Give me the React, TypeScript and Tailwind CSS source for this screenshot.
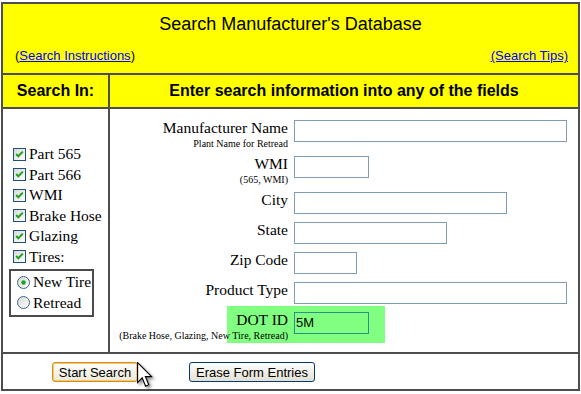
import React from "react";

const sans = { fontFamily: '"Liberation Sans", Arial, sans-serif' };
const serif = { fontFamily: '"Liberation Serif", "Times New Roman", serif' };

function CheckBox() {
  return (
    <svg width="13" height="13" viewBox="0 0 13 13" className="shrink-0">
      <defs>
        <linearGradient id="cbg" x1="0" y1="0" x2="1" y2="1">
          <stop offset="0" stopColor="#d8d8d2" />
          <stop offset="1" stopColor="#ffffff" />
        </linearGradient>
      </defs>
      <rect x="0.5" y="0.5" width="12" height="12" fill="url(#cbg)" stroke="#1c5180" />
      <path d="M3.2 6 L5.3 8.3 L9.8 3.6" fill="none" stroke="#21a121" strokeWidth="2" />
    </svg>
  );
}

function Radio({ checked }: { checked?: boolean }) {
  return (
    <svg width="13" height="13" viewBox="0 0 13 13" className="shrink-0">
      <defs>
        <linearGradient id="rbg" x1="0" y1="0" x2="1" y2="1">
          <stop offset="0" stopColor="#d8d8d2" />
          <stop offset="1" stopColor="#ffffff" />
        </linearGradient>
      </defs>
      <circle cx="6.5" cy="6.5" r="6" fill="url(#rbg)" stroke="#3b6791" />
      {checked && <circle cx="6.5" cy="6.5" r="2.3" fill="#21a121" />}
    </svg>
  );
}

const checks = ["Part 565", "Part 566", "WMI", "Brake Hose", "Glazing", "Tires:"];

export default function App() {
  return (
    <div className="w-[581px] h-[394px] bg-white overflow-hidden">
      <div className="ml-[1px] mt-[2px] w-[579px] h-[389px] border-2 border-[#4d4d4d] flex flex-col">
        {/* header */}
        <div className="h-[71px] shrink-0 bg-[#ffff00] border-b-2 border-[#4d4d4d] pt-[10px] text-black" style={sans}>
          <div className="text-center text-[18px] leading-[21px]">Search Manufacturer's Database</div>
          <div className="mt-[13px] flex justify-between pl-[12px] pr-[10px] text-[13px] leading-[15px]">
            <span>
              (<span className="text-[#0000ff] underline">Search Instructions</span>)
            </span>
            <span className="text-[#0000ff] underline">(Search Tips)</span>
          </div>
        </div>
        {/* second header row */}
        <div className="h-[34px] shrink-0 flex bg-[#ffff00] border-b-2 border-[#4d4d4d] font-bold text-[16px] leading-[18px] text-black" style={sans}>
          <div className="w-[107px] border-r-2 border-[#4d4d4d] flex items-center justify-center">Search In:</div>
          <div className="flex-1 flex items-center justify-center">Enter search information into any of the fields</div>
        </div>
        {/* body */}
        <div className="h-[245px] shrink-0 flex border-b-2 border-[#4d4d4d] text-black" style={serif}>
          <div className="w-[107px] shrink-0 border-r-2 border-[#4d4d4d] pt-[35px] text-[15.5px]">
            <div className="pl-[10px]">
              {checks.map((c) => (
                <div key={c} className="h-[20.5px] flex items-center gap-[3px] whitespace-nowrap leading-[20.5px]">
                  <CheckBox />
                  <span>{c}</span>
                </div>
              ))}
            </div>
            <div className="ml-[6px] mt-[2px] w-[85px] h-[48px] border-2 border-[#4b4b4b] pt-[1px] pl-[6px]">
              <div className="h-[20.5px] flex items-center gap-[3px] whitespace-nowrap leading-[20.5px]">
                <Radio checked />
                <span>New Tire</span>
              </div>
              <div className="h-[20.5px] flex items-center gap-[3px] whitespace-nowrap leading-[20.5px]">
                <Radio />
                <span>Retread</span>
              </div>
            </div>
          </div>
          <div className="flex-1 relative pt-[11px]">
            <div className="absolute left-[117px] top-[197px] w-[158px] h-[37px] bg-[#80ff80]" />
            {[
              { label: "Manufacturer Name", sub: "Plant Name for Retread", w: "w-[273px]", h: "h-[36px]" },
              { label: "WMI", sub: "(565, WMI)", w: "w-[75px]", h: "h-[36px]" },
              { label: "City", w: "w-[213px]", h: "h-[30px]" },
              { label: "State", w: "w-[153px]", h: "h-[30px]" },
              { label: "Zip Code", w: "w-[63px]", h: "h-[30px]" },
              { label: "Product Type", w: "w-[273px]", h: "h-[30px]" },
            ].map((r) => (
              <div key={r.label} className={`relative flex items-start ${r.h}`}>
                <div className="w-[178px] shrink-0 text-right">
                  <div className="text-[15.5px] leading-[16px]">{r.label}</div>
                  {r.sub && <div className="text-[10px] leading-[15px] whitespace-nowrap">{r.sub}</div>}
                </div>
                <div className={`ml-[6px] h-[22px] border border-[#7f9db9] bg-white ${r.w}`} />
              </div>
            ))}
            <div className="relative flex items-start">
              <div className="w-[178px] shrink-0 text-right">
                <div className="text-[15.5px] leading-[16px]">DOT ID</div>
                <div className="text-[10px] leading-[15px] whitespace-nowrap">(Brake Hose, Glazing, New Tire, Retread)</div>
              </div>
              <div className="ml-[6px] h-[22px] w-[75px] border border-[#2b8f8c] flex items-center pl-[1px] text-[13px]" style={sans}>
                5M
              </div>
            </div>
          </div>
        </div>
        {/* buttons */}
        <div className="flex-1 relative flex items-start pt-[8px] pl-[49px] gap-[51px] text-[13px] text-black" style={sans}>
          <div className="w-[86px] h-[20px] rounded-[3px] border border-[#d38a2c] bg-linear-to-b from-white to-[#ece9d8] shadow-[inset_0_0_0_1px_#f8c95f] flex items-center justify-center leading-[15px]">
            Start Search
          </div>
          <div className="w-[126px] h-[20px] rounded-[3px] border border-[#003c74] bg-linear-to-b from-white to-[#e3dfd2] flex items-center justify-center leading-[15px]">
            Erase Form Entries
          </div>
          <svg
            width="17"
            height="27"
            viewBox="0 0 17 27"
            className="absolute left-[134px] top-[8px] drop-shadow-[2px_2px_1.5px_rgba(0,0,0,0.45)]"
          >
            <path
              d="M0.6 0.6 V20.6 L5.2 15.8 L8.6 24.2 L11.8 22.8 L8.4 14.6 H14.6 Z"
              fill="#ffffff"
              stroke="#000000"
              strokeWidth="1.1"
              strokeLinejoin="miter"
            />
          </svg>
        </div>
      </div>
    </div>
  );
}
